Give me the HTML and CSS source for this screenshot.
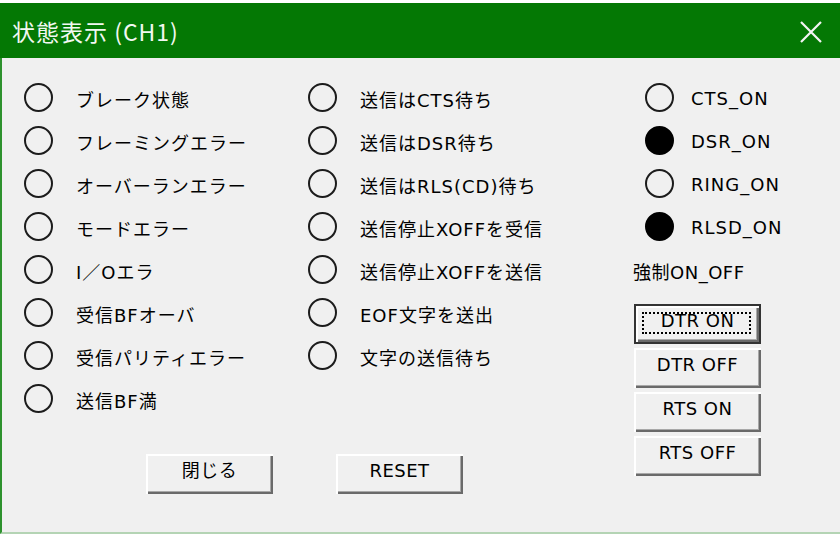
FILE: index.html
```html
<!DOCTYPE html>
<html lang="ja">
<head>
<meta charset="utf-8">
<title>状態表示 (CH1)</title>
<link rel="stylesheet" href="styles.css">
</head>
<body>
<div class="window">
  <div class="titlebar">
    <span class="title">状態表示 (CH1)</span>
    <span class="close">
      <svg width="24" height="24" viewBox="0 0 24 24"><path d="M2 2 L22 22 M22 2 L2 22" stroke="#f4f4f4" stroke-width="2.2" fill="none"/></svg>
    </span>
  </div>
  <div class="client">
    <div class="left">
      <div class="lists">
        <ul class="col col1">
          <li class="row"><span class="led"></span><span class="lbl">ブレーク状態</span></li>
          <li class="row"><span class="led"></span><span class="lbl">フレーミングエラー</span></li>
          <li class="row"><span class="led"></span><span class="lbl">オーバーランエラー</span></li>
          <li class="row"><span class="led"></span><span class="lbl">モードエラー</span></li>
          <li class="row"><span class="led"></span><span class="lbl">I／Oエラ</span></li>
          <li class="row"><span class="led"></span><span class="lbl">受信BFオーバ</span></li>
          <li class="row"><span class="led"></span><span class="lbl">受信パリティエラー</span></li>
          <li class="row"><span class="led"></span><span class="lbl">送信BF満</span></li>
        </ul>
        <ul class="col col2">
          <li class="row"><span class="led"></span><span class="lbl">送信はCTS待ち</span></li>
          <li class="row"><span class="led"></span><span class="lbl">送信はDSR待ち</span></li>
          <li class="row"><span class="led"></span><span class="lbl">送信はRLS(CD)待ち</span></li>
          <li class="row"><span class="led"></span><span class="lbl">送信停止XOFFを受信</span></li>
          <li class="row"><span class="led"></span><span class="lbl">送信停止XOFFを送信</span></li>
          <li class="row"><span class="led"></span><span class="lbl">EOF文字を送出</span></li>
          <li class="row"><span class="led"></span><span class="lbl">文字の送信待ち</span></li>
        </ul>
      </div>
      <div class="actions">
        <button class="btn">閉じる</button>
        <button class="btn">RESET</button>
      </div>
    </div>
    <div class="right">
      <ul class="col col3">
        <li class="row"><span class="led"></span><span class="lbl">CTS_ON</span></li>
        <li class="row"><span class="led on"></span><span class="lbl">DSR_ON</span></li>
        <li class="row"><span class="led"></span><span class="lbl">RING_ON</span></li>
        <li class="row"><span class="led on"></span><span class="lbl">RLSD_ON</span></li>
      </ul>
      <div class="force">強制ON_OFF</div>
      <div class="btns">
        <button class="btn default">DTR ON</button>
        <button class="btn">DTR OFF</button>
        <button class="btn">RTS ON</button>
        <button class="btn">RTS OFF</button>
      </div>
    </div>
  </div>
</div>
</body>
</html>
```
FILE: styles.css
```css
html, body {
  margin: 0;
  padding: 0;
  background: #ffffff;
}
body {
  width: 840px;
  height: 534px;
  overflow: hidden;
  font-family: "DejaVu Sans", "Noto Sans CJK JP", sans-serif;
  color: #000;
}
.window {
  padding-top: 3px;
  display: flex;
  flex-direction: column;
  height: 534px;
  box-sizing: border-box;
}
.titlebar {
  height: 55px;
  background: #047804;
  display: flex;
  align-items: center;
  justify-content: space-between;
  padding: 0 17px 0 12px;
  flex: none;
}
.title {
  color: #f2f8f2;
  font-family: "Noto Sans CJK JP", sans-serif;
  font-size: 23px;
  letter-spacing: 1px;
  line-height: 1;
  margin-top: 2px;
}
.close {
  display: flex;
  margin-top: 2px;
}
.client {
  flex: 1;
  background: #f0f0f0;
  border-left: 2px solid #2e922e;
  border-bottom: 2px solid #b4d4b4;
  display: flex;
  padding: 18px 0 0 22px;
}
.left {
  width: 609px;
  display: flex;
  flex-direction: column;
}
.lists {
  display: flex;
}
.col {
  list-style: none;
  margin: 0;
  padding: 0;
}
.col1 { width: 284px; }
.col2 { width: 325px; }
.row {
  height: 43px;
  display: flex;
  align-items: center;
}
.led {
  width: 29px;
  height: 29px;
  box-sizing: border-box;
  border: 2px solid #1c1c1c;
  border-radius: 50%;
  flex: none;
}
.led.on {
  background: #000;
  border-color: #000;
}
.lbl {
  font-size: 18px;
  letter-spacing: 1px;
  margin-left: 23px;
  padding-top: 2px;
  white-space: nowrap;
}
.col3 .row { padding-left: 12px; }
.col3 .lbl { margin-left: 17px; }
.force {
  height: 43px;
  display: flex;
  align-items: center;
  font-size: 18px;
  letter-spacing: 0.5px;
  padding-top: 2px;
  box-sizing: border-box;
}
.btns {
  margin-top: 13px;
  display: flex;
  flex-direction: column;
  gap: 4px;
  padding-left: 1px;
}
.actions {
  margin-top: 34px;
  padding-left: 122px;
  display: flex;
  gap: 63px;
}
.btn {
  position: relative;
  width: 127px;
  height: 40px;
  box-sizing: border-box;
  background: #f0f0f0;
  border: none;
  box-shadow: inset 2px 2px #ffffff, inset -2px -2px #6a6a6a, inset -3px -3px #a8a8a8;
  font-family: "DejaVu Sans", "Noto Sans CJK JP", sans-serif;
  font-size: 18px;
  letter-spacing: 0.5px;
  line-height: 1;
  color: #000;
  padding: 0 0 6px 0;
  margin: 0;
}
.btn.default {
  border: 2px solid #333;
}
.btn.default::after {
  content: "";
  position: absolute;
  left: 6px;
  top: 6px;
  right: 8px;
  bottom: 8px;
  border: 2px dotted #000;
}
```
